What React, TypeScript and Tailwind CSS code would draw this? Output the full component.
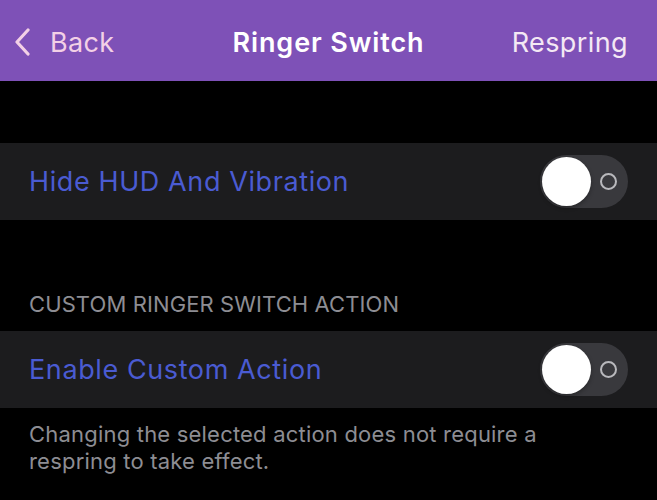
import React from "react";

function Toggle() {
  return (
    <div className="relative flex h-[53px] w-[88px] items-center rounded-full bg-[#39393d]">
      <div className="ml-[2px] h-[49px] w-[49px] rounded-full bg-white shadow-[0_2px_4px_rgba(0,0,0,0.3)]" />
      <div className="ml-[9px] h-[17px] w-[17px] rounded-full border-[2px] border-[#b9b9bd]" />
    </div>
  );
}

function Row({ label }: { label: string }) {
  return (
    <div className="flex h-[77px] items-center justify-between bg-[#1c1c1e] pl-[29px] pr-[29px]">
      <span className="pt-[2px] text-[27px] tracking-[0.6px] text-[#4a5bd2]">{label}</span>
      <Toggle />
    </div>
  );
}

export default function App() {
  return (
    <div
      className="h-[500px] w-[657px] overflow-hidden bg-black"
      style={{ fontFamily: "Inter, 'Noto Sans', sans-serif" }}
    >
      <div className="relative flex h-[81px] items-center bg-[#7e51b7] pl-[14px] pt-[5px]">
        <div className="flex items-center text-[#f3d0e6]">
          <svg width="16" height="28" viewBox="0 0 16 28" fill="none" className="-mt-[3px]">
            <path d="M14 2 L3 14 L14 26" stroke="#f3d0e6" strokeWidth="3.2" strokeLinecap="round" strokeLinejoin="round" />
          </svg>
          <span className="ml-[20px] text-[27px] tracking-[0.3px]">Back</span>
        </div>
        <div className="absolute left-0 right-0 top-0 flex h-[81px] items-center justify-center pt-[5px]">
          <span className="text-[27px] font-semibold tracking-[0.9px] text-white">Ringer Switch</span>
        </div>
        <span className="ml-auto mr-[29px] text-[27px] tracking-[0.4px] text-[#f4e8f4]">Respring</span>
      </div>
      <div className="h-[62px]" />
      <Row label="Hide HUD And Vibration" />
      <div className="flex h-[111px] items-end pb-[10px] pl-[29px]">
        <span className="text-[22px] uppercase tracking-[0.1px] text-[#8d8d93]">Custom Ringer Switch Action</span>
      </div>
      <Row label="Enable Custom Action" />
      <div className="px-[29px] pt-[13px] text-[22px] leading-[27px] tracking-[0.2px] text-[#8d8d93]">
        Changing the selected action does not require a
        <br />
        respring to take effect.
      </div>
    </div>
  );
}
